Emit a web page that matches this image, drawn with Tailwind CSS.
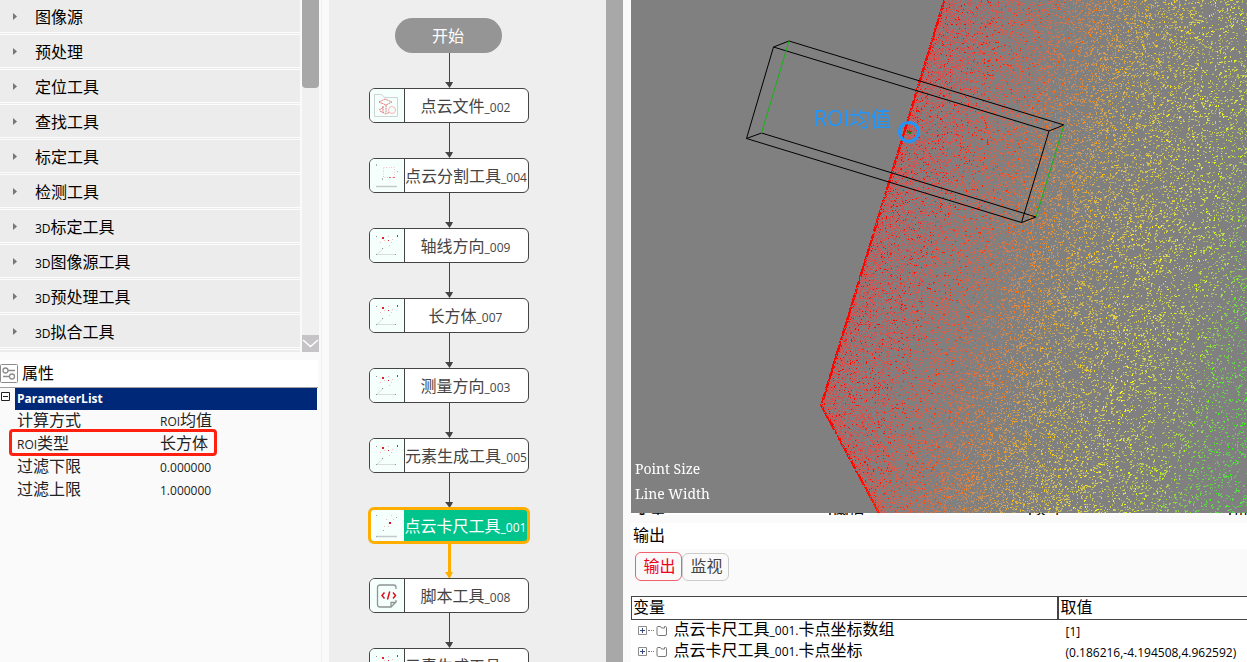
<!DOCTYPE html>
<html lang="zh-CN">
<head>
<meta charset="utf-8">
<title>点云卡尺工具</title>
<script src="https://cdn.jsdelivr.net/npm/@tailwindcss/browser@4"></script>
</head>
<body class="flex h-screen overflow-hidden bg-[#fafafa] font-['Noto_Sans_CJK_SC',sans-serif] text-base text-black">
<svg class="hidden" aria-hidden="true">
  <symbol id="points" viewBox="0 0 24 24">
    <path d="M3 20.500H22M3 20.500L9 14.500" stroke="#d8dddd" fill="none"/>
    <path d="M2 2h1v1h-1zM8 14h1v1h-1zM21 20h1v1h-1zM2 20h1v1h-1z" fill="#8f9494"/>
    <path d="M8 3h2v2h-2zM14 6h1v1h-1zM23 1h1v2h-1z" fill="#e0202c"/>
    <path d="M14 2h1v1h-1zM6 8h1v1h-1zM10 6h1v1h-1zM18 5h1v1h-1zM15 11h1v1h-1zM17 8h1v1h-1z" fill="#f3bcc0"/>
  </symbol>
  <symbol id="segment" viewBox="0 0 24 24">
    <path d="M2 22.500H23" stroke="#c4caca" stroke-width="1.500"/>
    <path d="M2 0h1v2h-1zM8 14h1v2h-1zM24 7h-1v1h1z" fill="#a9b4b0"/>
    <path d="M9.500 3.500H20.500V13.500H9.500z" stroke="#f6c4c8" stroke-dasharray="1 1.500" fill="none"/>
    <path d="M19 13h2v1h-2zM15 13h2v1h-2z" fill="#e0707a"/>
  </symbol>
  <symbol id="file" viewBox="0 0 24 24">
    <path d="M.5 22.500V.5H7L11 3.500H23.500V22.500z" fill="none" stroke="#cfd3d3"/>
    <path d="M5 8l6-3 7 3-6 3zM12 11v8M9 12v7M5 16l5-3M6 17l6 3 4-2" fill="none" stroke="#e8747b" stroke-dasharray="2 .7"/>
    <circle cx="18" cy="16" r="3.500" fill="none" stroke="#f4b8bc"/>
  </symbol>
  <symbol id="caliper" viewBox="0 0 24 24">
    <path d="M2 22.500H23" stroke="#c4caca" stroke-width="1.500"/>
    <path d="M2 1h1v1h-1zM2 22h1v1h-1zM9 16h1v1h-1zM22 3h1v1h-1z" fill="#a0a5a5"/>
    <path d="M15 8h2v2h-2z" fill="#e0101c"/>
    <path d="M12 5h1v1h-1zM19 5h1v1h-1zM14 12h1v1h-1zM10 12h1v1h-1zM17 1h1v1h-1z" fill="#e5c5c8"/>
  </symbol>
  <symbol id="script" viewBox="0 0 24 24">
    <path d="M22 5V3.500A2.500 2.500 0 0 0 19.500 1H6A2.500 2.500 0 0 0 3.500 3.500V20.500A2.500 2.500 0 0 0 6 23H17L22 18V16M17 23V18.500H22" fill="none" stroke="#8f9494" stroke-width="1.300"/>
    <path d="M10.500 8.500L8 11.500L10.500 14.500M19 8.500L21.500 11.500L19 14.500M15.700 7.500L13.500 15.500" fill="none" stroke="#e0101c" stroke-width="1.500"/>
  </symbol>
  <symbol id="folder" viewBox="0 0 12 12">
    <path d="M1 2.500Q1 1.500 2 1.500H4.500L5.500 3H8.500V1.500H9.500Q10.500 1.500 10.500 2.500V9Q10.500 10.500 9 10.500H2.500Q1 10.500 1 9z" fill="none" stroke="#777"/>
  </symbol>
  <symbol id="plus" viewBox="0 0 9 9">
    <path d="M.5.5H8.500V8.500H.5z" fill="#fff" stroke="#8c8c8c"/>
    <path d="M2 4.500H7M4.500 2V7" stroke="#334a86"/>
  </symbol>
  <symbol id="arrow" viewBox="0 0 10 35">
    <path d="M5.500 0V30" stroke="currentColor"/>
    <path d="M1 29H9L7.500 32L5.500 35L3.500 32z" fill="currentColor"/>
  </symbol>
</svg>

<aside class="flex w-[322px] shrink-0 flex-col border-r border-[#efefef]">
  <div class="flex h-[352px] shrink-0 gap-0.5">
    <nav id="tools" class="w-[300px] overflow-hidden bg-[#ececec]"></nav>
    <div class="flex w-[17px] flex-col justify-between bg-[#f0f0f0]">
      <div class="h-[88px] rounded-b-sm bg-[#a8a8a8]"></div>
      <button aria-label="向下滚动" class="h-[17px] bg-[#c6c4c6]">
        <svg class="h-[17px] w-[17px]" viewBox="0 0 17 17"><path d="M1 5L8.500 11.500L16 5" fill="none" stroke="#fff" stroke-width="1.500"/></svg>
      </button>
    </div>
  </div>
  <h2 class="mt-2 mr-[3px] flex h-7 items-center gap-[3px] border-b border-[#a0a0a0] bg-white">
    <svg class="h-[19px] w-[19px]" viewBox="0 0 19 19" fill="none" stroke="#8c8c8c"><rect x=".5" y=".5" width="17" height="18" rx="1"/><circle cx="5.500" cy="6.500" r="2.500" stroke-width="1.300"/><path d="M8 6.500H15M3 12.500H9" stroke-width="1.300"/><circle cx="12" cy="12.500" r="2.500" stroke-width="1.300"/></svg>
    <span class="pb-1 leading-5">属性</span>
  </h2>
  <div class="flex pr-1">
    <button aria-label="折叠" class="mt-1 h-[9px] w-[15px]"><svg class="ml-px h-[9px] w-[9px]" viewBox="0 0 9 9"><path d="M.5.5H8.500V8.500H.5zM2 4.500H7" fill="#fff" stroke="#222"/></svg></button>
    <div class="relative grow">
      <div class="h-[22px] bg-[#002878] pl-0.5 font-['Open_Sans','Noto_Sans_CJK_SC',sans-serif] text-xs leading-[21px] font-bold text-white">ParameterList</div>
      <table class="w-full text-[#222]">
        <tbody id="params"></tbody>
      </table>
      <div class="pointer-events-none absolute top-[41px] -left-1.5 h-[27px] w-[208px] rounded-sm border-3 border-[#ff2010]"></div>
    </div>
  </div>
</aside>

<div class="ml-[7px] flex w-[294px] shrink-0 justify-between overflow-hidden bg-[#eee]">
  <div id="flow" class="ml-10 flex w-40 flex-col items-center pt-[18px] text-[#444]">
    <div class="mr-0.5 flex h-[35px] w-[107px] shrink-0 items-center justify-center rounded-full bg-[#959595] pb-0.5 text-white">开始</div>
  </div>
  <div class="w-[17px] bg-[#a8a8a8]"></div>
</div>

<main class="ml-2 flex min-w-0 grow flex-col">
  <section class="relative h-[513px] shrink-0 overflow-hidden bg-[#808080]">
    <canvas id="cloud" width="616" height="513" class="block"></canvas>
    <span class="absolute top-[103px] left-[183px] text-[21px] leading-7 text-[#1e96ff]"><span class="font-['Open_Sans',sans-serif]">ROI</span>均值</span>
    <svg class="absolute top-0 left-0 h-[513px] w-[616px]" viewBox="631 0 616 513" fill="none">
      <g stroke="#000">
        <path d="M789 41L773.500 47L746.500 138.500L761.500 133M789 41L1064 125L1049 131L773.500 47M746.500 138.500L1021.500 222.500L1036 217L761.500 133M1049 131L1021.500 222.500"/>
      </g>
      <path d="M789 41L761.500 133M1064 125L1036 217" stroke="#12b412"/>
      <circle cx="909" cy="132" r="9.500" stroke="#1e96ff" stroke-width="3"/>
      <path d="M907 131h2v-1h1v2h1v2h-2v-1h-2z" fill="#128a12"/>
    </svg>
    <div class="absolute bottom-[7px] left-1 font-['Noto_Serif','Liberation_Serif',serif] text-sm leading-[25px] text-white"><p>Point Size</p><p>Line Width</p></div>
  </section>
  <div class="flex h-[2px] shrink-0 items-end overflow-hidden bg-white text-base leading-[14px]">
    <span class="w-[198px] shrink-0 pl-[3px]">变量</span><span class="w-[200px] shrink-0 border-l-2 border-[#444] pl-0.5">阈值</span><span class="w-[200px] shrink-0 border-l-2 border-[#444] pl-0.5">类型</span><span class="shrink-0 border-l-2 border-[#444] pl-0.5">备注</span>
  </div>
  <h2 class="mt-2 h-[26px] shrink-0 bg-white pl-0.5 leading-[22px]">输出</h2>
  <div class="flex shrink-0 items-start px-1 pt-[3px] pb-[15px] leading-none">
    <button class="h-[29px] w-[47px] rounded-md border border-[#f06070] pb-1 pl-0.5 text-[#f00020]">输出</button>
    <button class="mt-px h-7 w-[47px] rounded-md border border-[#ccc] pb-1 pl-0.5 text-[#444]">监视</button>
  </div>
  <table class="w-full table-fixed bg-white">
    <thead>
      <tr class="h-[23px] border-y border-l border-[#444] text-left leading-4">
        <th class="w-[426px] border-r-2 border-[#444] pb-1 pl-px font-normal">变量</th><th class="pb-1 pl-0.5 font-normal">取值</th>
      </tr>
    </thead>
    <tbody id="outputs"></tbody>
  </table>
</main>

<template id="toolRow">
  <button class="flex h-[35px] w-full flex-col text-left">
    <span class="flex h-8 w-full items-center"><svg class="mr-[18px] ml-[13px] h-[7px] w-1" viewBox="0 0 4 7"><path d="M0 0L4 3.500L0 7z" fill="#777"/></svg><span class="pb-px" data-text></span></span>
    <span class="h-[3px] w-full border-y border-[#fcfcfc]"></span>
  </button>
</template>
<template id="paramRow"><tr class="h-[23px] leading-[18px]"><th class="w-[143px] pb-[5px] pl-0.5 text-left font-normal" data-text></th><td class="pb-[5px] pl-0.5" data-value></td></tr></template>
<template id="link"><svg class="h-[35px] w-[10px] shrink-0"><use href="#arrow"/></svg></template>
<template id="activeLink"><svg class="h-[35px] w-[10px] shrink-0 text-[#ffae00]" viewBox="0 0 10 35"><path d="M5.500 0V30" stroke="currentColor" stroke-width="3"/><path d="M1 29H9L5.500 36z" fill="currentColor"/></svg></template>
<template id="node">
  <button class="flex h-[35px] w-40 shrink-0 overflow-hidden rounded-md border border-[#444] bg-white">
    <span class="flex h-full w-[35px] shrink-0 items-center justify-center border-r border-[#444] bg-[#f5fffc] pr-0.5"><svg class="h-6 w-6"><use href="#points"/></svg></span>
    <span class="flex h-full grow items-center justify-center pr-0.5 pb-0.5 whitespace-nowrap"><span data-text></span></span>
  </button>
</template>
<template id="activeNode">
  <button class="-my-px flex h-[37px] w-[162px] shrink-0 overflow-hidden rounded-md border-3 border-[#ffae00] bg-[#00c48c] text-white">
    <span class="flex h-full w-[33px] shrink-0 items-center justify-center bg-[#f5fffc] pr-1"><svg class="h-6 w-6"><use href="#caliper"/></svg></span>
    <span class="flex h-full grow items-center justify-center pb-0.5 whitespace-nowrap"><span data-text></span></span>
  </button>
</template>
<template id="outputRow">
  <tr class="h-5 leading-4 whitespace-nowrap">
    <td><span class="flex items-center pl-1.5"><svg class="h-[9px] w-[9px]"><use href="#plus"/></svg><span class="mr-0.5 ml-px w-[6px] border-t border-dotted border-[#777]"></span><svg class="mr-1.5 h-3 w-3"><use href="#folder"/></svg><span class="pb-1" data-text></span></span></td>
    <td class="pb-0.5 pl-2" data-value></td>
  </tr>
</template>

<script>
const $ = id => document.getElementById(id);
// Latin runs and digits are set smaller than the Chinese text beside them.
function mixed(el, text) {
  for (const part of text.match(/[\x20-\x7e]+|[^\x20-\x7e]+/g) || []) {
    const s = document.createElement('span');
    s.textContent = part;
    if (part.charCodeAt(0) < 128) s.className = "font-['Open_Sans',sans-serif] text-xs leading-none";
    el.append(s);
  }
}
function add(parent, template, text, value) {
  const n = $(template).content.cloneNode(true).firstElementChild;
  if (text) mixed(n.querySelector('[data-text]'), text);
  if (value) mixed(n.querySelector('[data-value]'), value);
  $(parent).append(n);
  return n;
}
['图像源','预处理','定位工具','查找工具','标定工具','检测工具','3D标定工具','3D图像源工具','3D预处理工具','3D拟合工具'].forEach(t => add('tools', 'toolRow', t));

[['计算方式','ROI均值'],['ROI类型','长方体'],['过滤下限','0.000000'],['过滤上限','1.000000']].forEach(([a, b]) => add('params', 'paramRow', a, b));

const nodes = [['点云文件_002','file'],['点云分割工具_004','segment'],['轴线方向_009','points'],['长方体_007','points'],['测量方向_003','points'],['元素生成工具_005','points'],['点云卡尺工具_001','caliper'],['脚本工具_008','script'],['元素生成工具_006','points']];
nodes.forEach(([t, icon], i) => {
  add('flow', i && nodes[i - 1][1] === 'caliper' ? 'activeLink' : 'link');
  add('flow', icon === 'caliper' ? 'activeNode' : 'node', t).querySelector('use').setAttribute('href', '#' + icon);
});

[['点云卡尺工具_001.卡点坐标数组','[1]'],['点云卡尺工具_001.卡点坐标','(0.186216,-4.194508,4.962592)'],['点云卡尺工具_001.卡点距离','0.000000']].forEach(([a, b]) => add('outputs', 'outputRow', a, b));

// Point cloud: height-coloured samples, densest along the left edge of the part.
const ctx = $('cloud').getContext('2d');
let seed = 12345;
const rnd = () => { seed = (seed * 1664525 + 1013904223) >>> 0; return seed / 4294967296; };
const ramp = [[900,0],[985,2],[1050,12],[1100,28],[1150,46],[1220,58],[1280,72],[1330,108],[1400,120]];
function hue(u) {
  for (let i = 1; i < ramp.length; i++) if (u < ramp[i][0]) {
    const [a, b] = ramp[i - 1], [c, d] = ramp[i];
    return b + (d - b) * Math.max(0, (u - a) / (c - a));
  }
  return 120;
}
for (let y = 0; y < 513; y++) {
  const edge = y < 405 ? 943 - y * 123 / 405 : 820 + (y - 405) * 58 / 108;
  for (let x = Math.round(edge); x < 1247; x++) {
    const d = x - edge;
    const p = 0.07 + 0.4 * Math.exp(-d / 110) + 0.4 * Math.exp(-d / 7);
    if (rnd() > p) continue;
    const h = hue(x + y * 0.26 + (rnd() - .5) * 24);
    const far = Math.min(1, d / 250);
    const bright = d < 2 || rnd() < .08;
    const a = bright ? 1 : .35 + rnd() * .4;
    ctx.fillStyle = `hsla(${h},100%,${bright ? 50 : 60}%,${a})`;
    ctx.fillRect(x - 631, y, rnd() < far * .5 ? 2 : 1, 1);
    if (rnd() < far * .3) ctx.fillRect(x - 631, y + 1, 1, 1);
  }
}
</script>
</body>
</html>
